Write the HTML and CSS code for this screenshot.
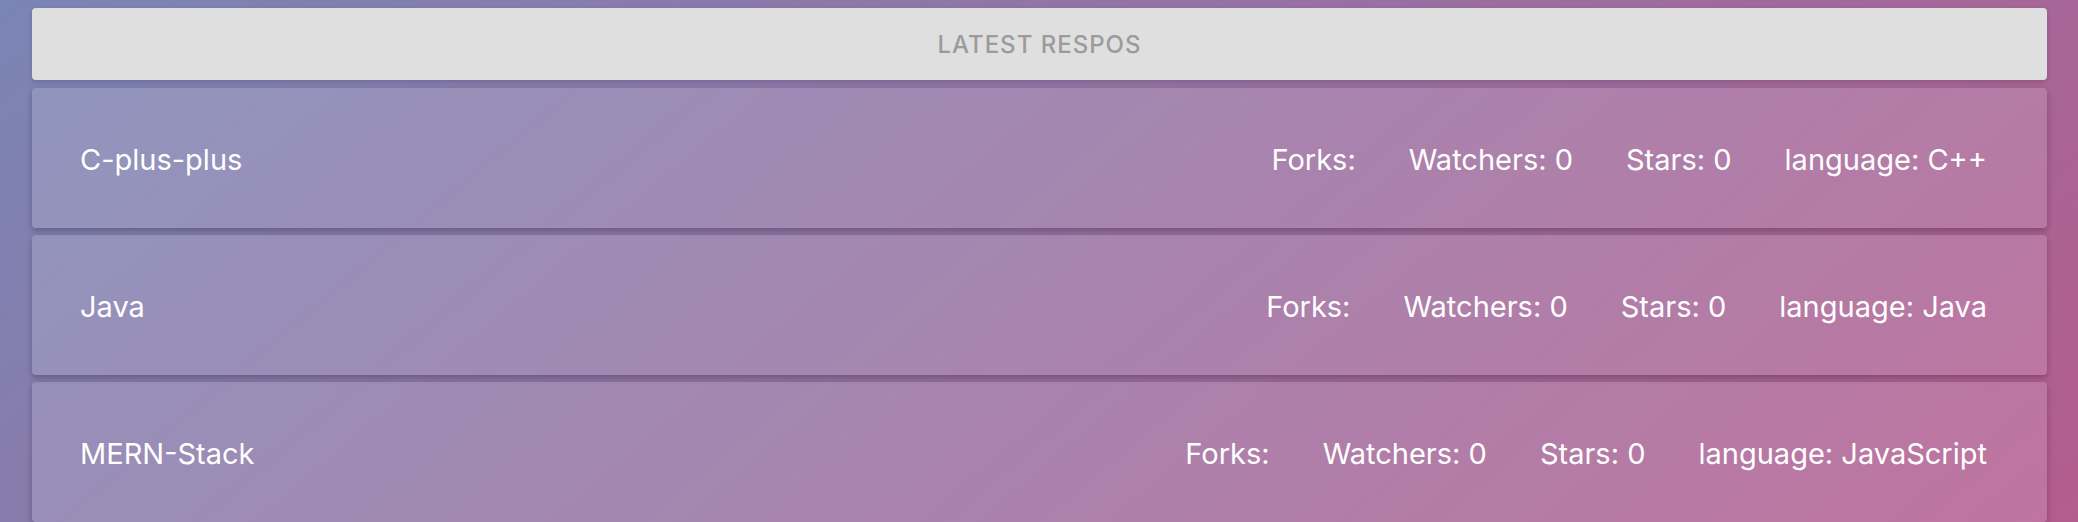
FILE: index.html
```html
<!DOCTYPE html>
<html lang="en">
<head>
<meta charset="utf-8">
<title>Latest Repos</title>
<link rel="stylesheet" href="styles.css">
</head>
<body>
<main class="page">
  <div class="title-bar">Latest Respos</div>
  <ul class="repo-list">
    <li class="repo">
      <span class="repo-name">C-plus-plus</span>
      <div class="repo-stats">
        <span class="stat">Forks: </span>
        <span class="stat">Watchers: 0</span>
        <span class="stat">Stars: 0</span>
        <span class="stat">language: C++</span>
      </div>
    </li>
    <li class="repo">
      <span class="repo-name">Java</span>
      <div class="repo-stats">
        <span class="stat">Forks: </span>
        <span class="stat">Watchers: 0</span>
        <span class="stat">Stars: 0</span>
        <span class="stat">language: Java</span>
      </div>
    </li>
    <li class="repo">
      <span class="repo-name">MERN-Stack</span>
      <div class="repo-stats">
        <span class="stat">Forks: </span>
        <span class="stat">Watchers: 0</span>
        <span class="stat">Stars: 0</span>
        <span class="stat">language: JavaScript</span>
      </div>
    </li>
  </ul>
</main>
</body>
</html>
```

FILE: styles.css
```css
html, body {
  margin: 0;
  height: 100%;
}
body {
  background: linear-gradient(140deg, #7a85b5 0%, #b45c8e 100%);
  font-family: Inter, "Noto Sans", "Liberation Sans", sans-serif;
  overflow: hidden;
}
.page {
  padding: 8px 31px 0 32px;
  display: flex;
  flex-direction: column;
  gap: 8px;
}
.title-bar {
  height: 72px;
  background: #dfdfdf;
  border-radius: 4px;
  display: flex;
  align-items: center;
  justify-content: center;
  text-transform: uppercase;
  color: #9b9b9b;
  font-size: 24px;
  letter-spacing: 1px;
  font-weight: 500;
  box-shadow: 0 2px 5px rgba(0, 0, 0, 0.15);
}
.repo-list {
  list-style: none;
  margin: 0;
  padding: 0;
  display: flex;
  flex-direction: column;
  gap: 7px;
}
.repo {
  height: 140px;
  box-sizing: border-box;
  padding: 2px 60px 0 48px;
  display: flex;
  align-items: center;
  justify-content: space-between;
  background: rgba(255, 255, 255, 0.15);
  border-radius: 4px;
  box-shadow: 0 3px 6px rgba(0, 0, 0, 0.25);
  color: #fff;
  font-size: 29px;
}
.repo-stats {
  display: flex;
  gap: 53px;
}
```
